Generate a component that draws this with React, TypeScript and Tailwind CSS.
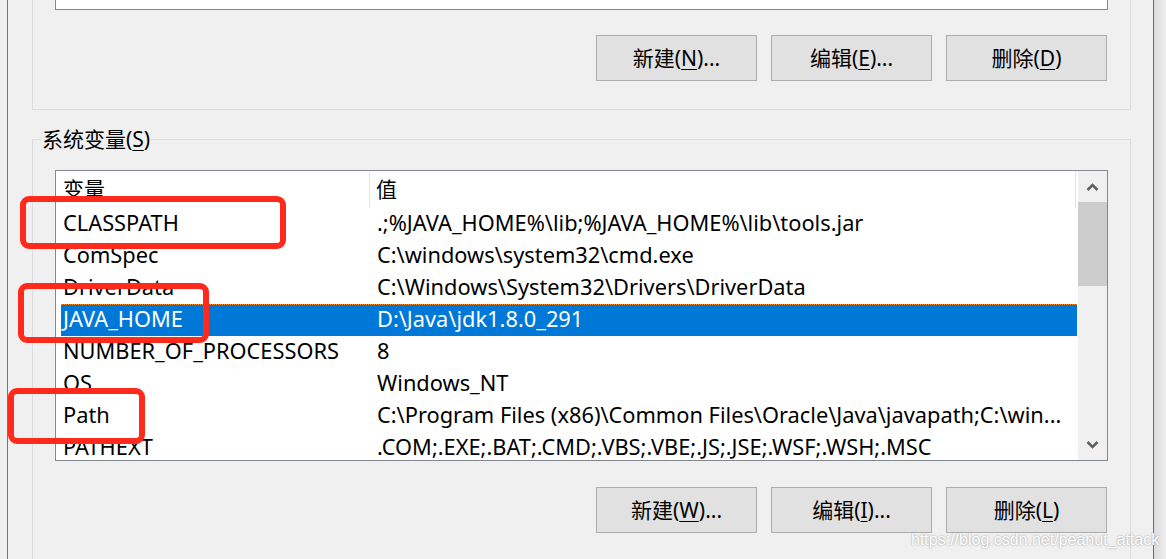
import React from 'react';

const font = { fontFamily: '"Noto Sans", "Noto Sans CJK SC", sans-serif' };

// rows of the system variables list
const rows = [
  { name: 'CLASSPATH', value: '.;%JAVA_HOME%\\lib;%JAVA_HOME%\\lib\\tools.jar' },
  { name: 'ComSpec', value: 'C:\\windows\\system32\\cmd.exe' },
  { name: 'DriverData', value: 'C:\\Windows\\System32\\Drivers\\DriverData' },
  { name: 'JAVA_HOME', value: 'D:\\Java\\jdk1.8.0_291', selected: true },
  { name: 'NUMBER_OF_PROCESSORS', value: '8' },
  { name: 'OS', value: 'Windows_NT' },
  { name: 'Path', value: 'C:\\Program Files (x86)\\Common Files\\Oracle\\Java\\javapath;C:\\win...' },
  { name: 'PATHEXT', value: '.COM;.EXE;.BAT;.CMD;.VBS;.VBE;.JS;.JSE;.WSF;.WSH;.MSC' },
];

function WinButton({ label, hotkey, dots }: { label: string; hotkey: string; dots?: boolean }) {
  return (
    <button className="w-[161px] h-[46px] bg-[#e1e1e1] border border-[#adadad] text-[21px] text-black flex items-center justify-center leading-none">
      {label}(<span className="underline underline-offset-[3px] decoration-1">{hotkey}</span>){dots ? '...' : ''}
    </button>
  );
}

function Chevron({ up }: { up?: boolean }) {
  return (
    <svg width="13" height="8" viewBox="0 0 13 8">
      <path
        d={up ? 'M1.5 7 L6.5 2 L11.5 7' : 'M1.5 1 L6.5 6 L11.5 1'}
        stroke="#606060"
        strokeWidth="2.6"
        fill="none"
      />
    </svg>
  );
}

export default function App() {
  return (
    <div className="relative w-[1166px] h-[559px] overflow-hidden bg-[#f0f0f0] flex text-black" style={font}>
      <div className="w-[7px] bg-[#efefef]" />
      <div className="w-px bg-[#767676]" />

      {/* dialog body */}
      <main className="flex-1 flex flex-col pl-[24px] pr-[22px]">
        {/* user variables group (cut off at the top) */}
        <section className="h-[110px] border-x border-b border-[#dcdcdc] flex flex-col">
          <div className="ml-[22px] mr-[22px] h-[10px] bg-white border-x border-b border-[#828790]" />
          <div className="mt-[25px] mr-[23px] flex justify-end gap-[14px]">
            <WinButton label="新建" hotkey="N" dots />
            <WinButton label="编辑" hotkey="E" dots />
            <WinButton label="删除" hotkey="D" />
          </div>
        </section>

        {/* system variables group */}
        <section className="relative mt-[29px] flex-1 border-x border-t border-[#dcdcdc] flex flex-col">
          <span className="absolute -top-[14px] left-[8px] px-px bg-[#f0f0f0] text-[21px] leading-[26px]">
            系统变量(<span className="underline underline-offset-[3px] decoration-1">S</span>)
          </span>

          <div className="mt-[30px] ml-[22px] mr-[22px] h-[291px] bg-white border border-[#828790] flex">
            <div className="w-[1021px] flex flex-col overflow-hidden">
              {/* header */}
              <div className="h-[37px] shrink-0 flex text-[21px] w-[1020px] border-r border-[#e5e5e5]">
                <div className="w-[314px] pl-[7px] flex items-center border-r border-[#e5e5e5]">变量</div>
                <div className="flex-1 pl-[6px] flex items-center">值</div>
              </div>
              {rows.map((r) => (
                <div
                  key={r.name}
                  className={
                    'ml-[5px] w-[1016px] h-[32px] shrink-0 flex items-center pb-[2px] text-[21.8px] whitespace-nowrap ' +
                    (r.selected ? 'bg-[#0078d7] text-white border-t border-dotted border-[#f08a24]' : '')
                  }
                >
                  <div className="w-[316px] pl-[2px] overflow-hidden">{r.name}</div>
                  <div className="flex-1 overflow-hidden">{r.value}</div>
                </div>
              ))}
            </div>

            {/* scrollbar */}
            <div className="w-[29px] ml-[1px] bg-[#f0f0f0] flex flex-col">
              <div className="h-[31px] flex items-center justify-center">
                <Chevron up />
              </div>
              <div className="h-[84px] bg-[#cdcdcd]" />
              <div className="flex-1" />
              <div className="h-[31px] flex items-center justify-center">
                <Chevron />
              </div>
            </div>
          </div>

          <div className="mt-[26px] mr-[23px] flex justify-end gap-[14px]">
            <WinButton label="新建" hotkey="W" dots />
            <WinButton label="编辑" hotkey="I" dots />
            <WinButton label="删除" hotkey="L" />
          </div>
        </section>
      </main>

      <div className="w-px bg-[#6e6e6e]" />
      <div className="flex-1 bg-linear-to-r from-[#dcdcdc] to-[#efefef]" />

      {/* red annotation boxes drawn over the screenshot */}
      <div className="absolute left-[20px] top-[196px] w-[266px] h-[53px] border-[6px] border-[#ff2a1c] rounded-[9px]" />
      <div className="absolute left-[18px] top-[283px] w-[191px] h-[60px] border-[6px] border-[#ff2a1c] rounded-[9px]" />
      <div className="absolute left-[8px] top-[388px] w-[137px] h-[56px] border-[6px] border-[#ff2a1c] rounded-[9px]" />

      {/* watermark */}
      <div
        className="absolute left-[911px] top-[528px] text-[16px] text-white [text-shadow:0_0_2px_#8c8c8c]"
        style={{ fontFamily: '"Liberation Sans", Arial, sans-serif' }}
      >
        https://blog.csdn.net/peanut_attack
      </div>
    </div>
  );
}
